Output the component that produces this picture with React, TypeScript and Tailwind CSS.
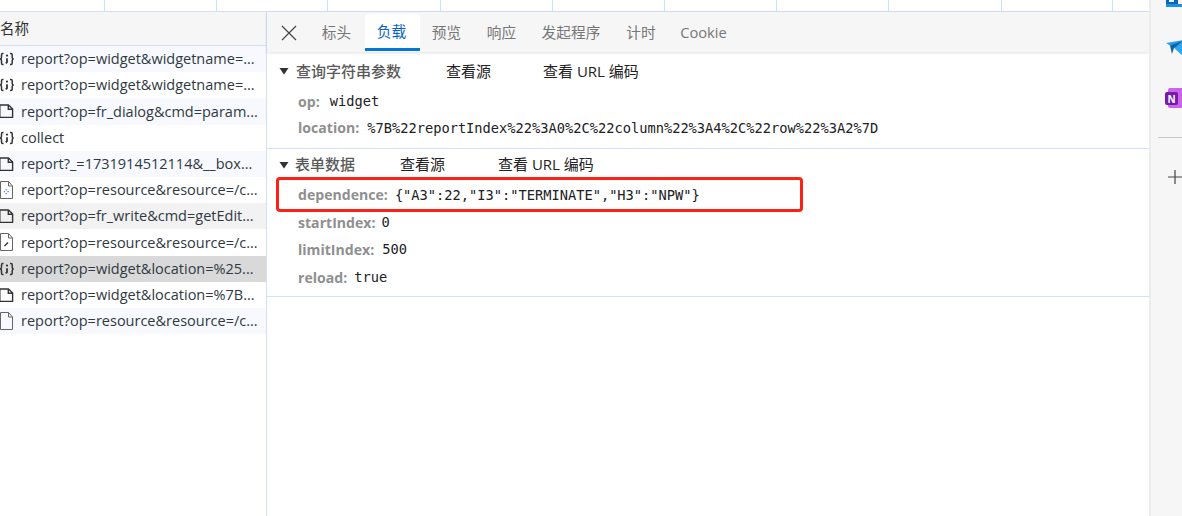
import React from "react";

const sans = "font-['Segoe_UI','Open_Sans','Noto_Sans','Noto_Sans_CJK_SC',sans-serif]";

function JsonIcon() {
  return (
    <svg width="16" height="16" viewBox="0 0 16 16" fill="none" stroke="#333" strokeWidth="1.5" className="shrink-0 ml-[-1px]">
      <path d="M4.5 2.5 H3.6 C2.6 2.5 2.5 3.2 2.5 4 V6.2 C2.5 7.2 2 7.8 1 8 C2 8.2 2.5 8.8 2.5 9.8 V12 C2.5 12.8 2.6 13.5 3.6 13.5 H4.5" />
      <path d="M11 2.5 H12 C13 2.5 13.2 3.2 13.2 4 V6.2 C13.2 7.2 13.7 7.8 14.6 8 C13.7 8.2 13.2 8.8 13.2 9.8 V12 C13.2 12.8 13 13.5 12 13.5 H11" />
      <circle cx="8" cy="4.6" r="1.1" fill="#333" stroke="none" />
      <path d="M8 7.2 V11.2 L6.8 12.4" strokeWidth="1.8" />
    </svg>
  );
}

function DocIcon() {
  return (
    <svg width="16" height="16" viewBox="0 0 16 16" fill="none" stroke="#333" strokeWidth="1.4" className="shrink-0 ml-[-1px]">
      <path d="M0.8 2 H9.5 L13.6 6 V14.4 H0.8 Z" strokeLinejoin="round" />
      <path d="M9.3 2 V6.2 H13.6" />
    </svg>
  );
}

function TallDoc({ mark }: { mark?: "dots" | "pen" }) {
  return (
    <svg width="16" height="18" viewBox="0 0 16 18" fill="none" stroke="#666" strokeWidth="1" className="shrink-0 ml-[-1px]">
      <path d="M1.5 0.5 H9.5 L13.5 5 V17.5 H1.5 Z" />
      <path d="M9.5 0.5 V5 H13.5" />
      {mark === "dots" && (
        <g fill="#5b8def" stroke="none">
          <rect x="6.5" y="8" width="1.3" height="1.3" />
          <rect x="4.8" y="10" width="1.3" height="1.3" />
          <rect x="8.4" y="10" width="1.3" height="1.3" />
          <rect x="6.5" y="12" width="1.3" height="1.3" />
        </g>
      )}
      {mark === "pen" && <path d="M5.5 13 L9 9.5" stroke="#333" strokeWidth="1.5" />}
    </svg>
  );
}

type Row = { t: string; i: React.ReactNode; bg: string };
const rows: Row[] = [
  { t: "report?op=widget&widgetname=...", i: <JsonIcon />, bg: "bg-[#f7f9fe]" },
  { t: "report?op=widget&widgetname=...", i: <JsonIcon />, bg: "bg-white" },
  { t: "report?op=fr_dialog&cmd=param...", i: <DocIcon />, bg: "bg-[#f7f9fe]" },
  { t: "collect", i: <JsonIcon />, bg: "bg-white" },
  { t: "report?_=1731914512114&__box...", i: <DocIcon />, bg: "bg-[#f7f9fe]" },
  { t: "report?op=resource&resource=/c...", i: <TallDoc mark="dots" />, bg: "bg-white" },
  { t: "report?op=fr_write&cmd=getEdit...", i: <DocIcon />, bg: "bg-[#f2f2f2]" },
  { t: "report?op=resource&resource=/c...", i: <TallDoc mark="pen" />, bg: "bg-white" },
  { t: "report?op=widget&location=%25...", i: <JsonIcon />, bg: "bg-[#d9d9d9]" },
  { t: "report?op=widget&location=%7B...", i: <DocIcon />, bg: "bg-white" },
  { t: "report?op=resource&resource=/c...", i: <TallDoc />, bg: "bg-[#f7f9fe]" },
];

const tabs = [
  { t: "标头", w: "w-[55px]" },
  { t: "负载", w: "w-[55px]", active: true },
  { t: "预览", w: "w-[55px]" },
  { t: "响应", w: "w-[55px]" },
  { t: "发起程序", w: "w-[84px]" },
  { t: "计时", w: "w-[56px]" },
  { t: "Cookie", w: "w-[69px]" },
];

function Triangle() {
  return (
    <svg width="10" height="8" viewBox="0 0 10 8" className="shrink-0">
      <path d="M0.5 1 H9.5 L5 7.5 Z" fill="#333" />
    </svg>
  );
}

function KV({ k, v, gap, h, highlight }: { k: string; v: string; gap: string; h: string; highlight?: boolean }) {
  return (
    <div className={`relative flex items-center pl-[31px] ${h} ${gap}`}>
      <span className="font-bold text-[14.1px] text-[#8f8f8f]">{k}:</span>
      <span className="font-['DejaVu_Sans_Mono',monospace] text-[13.7px] text-[#202124] whitespace-pre">{v}</span>
      {highlight && (
        <div className="absolute left-[9px] top-[-4px] w-[527px] h-[35px] border-[3px] border-[#fb2115] rounded-[4px]" />
      )}
    </div>
  );
}

export default function App() {
  return (
    <div className={`w-[1182px] h-[516px] bg-white flex overflow-hidden ${sans}`}>
      <div className="w-[1149px] h-full flex flex-col shrink-0">
        <div className="h-[12px] shrink-0 flex border-b border-[#d2e1f8]">
          {[105, 112, 111, 113, 112, 112, 112, 112, 113, 111, 37].map((w, i) => (
            <div key={i} style={{ width: w }} className="h-full border-r border-[#cfdff8] shrink-0" />
          ))}
        </div>
        <div className="flex-1 flex min-h-0">
          <div className="w-[267px] shrink-0 border-r border-[#d2e1f8] flex flex-col">
            <div className="h-[34px] shrink-0 bg-[#f6f6f6] border-b border-[#d2e1f8] flex items-center text-[14.5px] text-[#303030]">
              名称
            </div>
            {rows.map((r, i) => (
              <div key={i} className={`h-[26.2px] shrink-0 flex items-center gap-[6px] text-[14.5px] text-[#303942] whitespace-nowrap ${r.bg}`}>
                {r.i}
                <span>{r.t}</span>
              </div>
            ))}
          </div>
          <div className="flex-1 flex flex-col min-w-0">
            <div className="h-[40px] shrink-0 bg-[#f6f6f6] shadow-[0_1px_3px_rgba(0,0,0,0.12)] flex items-start pl-[13px] text-[14.7px] text-[#777]">
              <svg width="18" height="18" viewBox="0 0 18 18" className="mt-[12px] mr-[12px] shrink-0" stroke="#444" strokeWidth="1.2">
                <path d="M2 2 L16 16 M16 2 L2 16" />
              </svg>
              {tabs.map((t) =>
                t.active ? (
                  <div key={t.t} className={`${t.w} h-[37px] mt-[2px] pr-[2px] bg-white rounded-t-[3px] border-b-[3px] border-[#0078d4] flex items-center justify-center text-[#0b63c9] shrink-0`}>
                    {t.t}
                  </div>
                ) : (
                  <div key={t.t} className={`${t.w} h-[37px] mt-[2px] pr-[2px] flex items-center justify-center shrink-0`}>
                    {t.t}
                  </div>
                )
              )}
            </div>
            <div className="border-b border-[#d2e1f8] h-[97px] shrink-0 pt-[6px]">
              <div className="h-[26px] flex items-center pl-[12px] text-[15px]">
                <Triangle />
                <span className="ml-[7px] w-[150px] font-medium text-[#5a5a5a]">查询字符串参数</span>
                <span className="w-[97px] text-[#222]">查看源</span>
                <span className="text-[#222]">查看 URL 编码</span>
              </div>
              <div className="h-[4px]" />
              <KV k="op" v="widget" gap="gap-[10px]" h="h-[27px]" />
              <KV k="location" v="%7B%22reportIndex%22%3A0%2C%22column%22%3A4%2C%22row%22%3A2%7D" gap="gap-[8px]" h="h-[26px]" />
            </div>
            <div className="border-b border-[#d2e1f8] h-[148px] shrink-0 pt-[3px]">
              <div className="h-[25px] flex items-center pl-[12px] text-[15px]">
                <Triangle />
                <span className="ml-[6px] w-[105px] font-medium text-[#5a5a5a]">表单数据</span>
                <span className="w-[98px] text-[#222]">查看源</span>
                <span className="text-[#222]">查看 URL 编码</span>
              </div>
              <div className="h-[4px]" />
              <KV k="dependence" v={'{"A3":22,"I3":"TERMINATE","H3":"NPW"}'} gap="gap-[7px]" h="h-[28px]" highlight />
              <KV k="startIndex" v="0" gap="gap-[6px]" h="h-[27px]" />
              <KV k="limitIndex" v="500" gap="gap-[8px]" h="h-[27px]" />
              <KV k="reload" v="true" gap="gap-[7px]" h="h-[29px]" />
            </div>
          </div>
        </div>
      </div>
      <div className="flex-1 h-full bg-[#f6f6f6] border-l-2 border-[#ececec] overflow-hidden flex flex-col items-start">
        <svg width="22" height="7" viewBox="0 0 22 7" className="ml-[15px] shrink-0">
          <rect x="0" y="0" width="12" height="4" fill="#0a64b8" />
          <rect x="0" y="4" width="22" height="3" fill="#1a8fe3" />
          <rect x="3" y="0" width="5" height="2" fill="#dff" />
        </svg>
        <svg width="22" height="16" viewBox="0 0 22 16" className="ml-[15px] mt-[33px] shrink-0">
          <path d="M0 3 L17 0 V12 L8 8 Z" fill="#2a9fe8" />
          <path d="M4 5.5 L17 1 L8 8 L6 14 Z" fill="#0d5fa8" />
          <path d="M17 1 V16 L9 9 Z" fill="#30a9f2" />
        </svg>
        <div className="ml-[14px] mt-[32px] relative w-[19px] h-[20px] shrink-0">
          <div className="absolute left-[3px] top-0 w-[18px] h-[20px] rounded-[2px] bg-[#ca64ea]" />
          <div className="absolute left-0 top-[4px] w-[13px] h-[13px] rounded-[2px] bg-[#7719aa] flex items-center justify-center text-white text-[10px] font-bold leading-none">
            N
          </div>
        </div>
        <div className="ml-[7px] mt-[29px] w-[24px] h-[1px] bg-[#c8c8c8] shrink-0" />
        <svg width="16" height="16" viewBox="0 0 16 16" className="ml-[16px] mt-[31px] shrink-0" stroke="#444" strokeWidth="1.2">
          <path d="M1 8 H15 M8 1 V15" />
        </svg>
      </div>
    </div>
  );
}
